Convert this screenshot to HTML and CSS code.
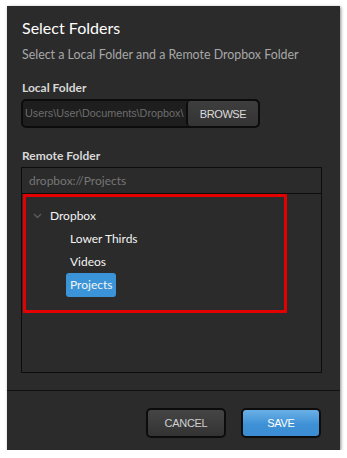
FILE: index.html
```html
<!DOCTYPE html>
<html lang="en">
<head>
<meta charset="UTF-8">
<title>Select Folders</title>
<link rel="stylesheet" href="styles.css">
</head>
<body>

<div class="dialog">
  <div class="content">
    <h1 class="title">Select Folders</h1>
    <p class="subtitle">Select a Local Folder and a Remote Dropbox Folder</p>

    <div class="section-label">Local Folder</div>
    <div class="local-row">
      <div class="local-path">Users\User\Documents\Dropbox\</div>
      <button class="browse">BROWSE</button>
    </div>

    <div class="section-label remote-label">Remote Folder</div>
    <div class="remote-box">
      <div class="remote-path">dropbox://Projects</div>
      <div class="tree">
        <div class="tree-row root">
          <svg class="chevron" width="9" height="6" viewBox="0 0 9 6"><polyline points="1,1 4.5,4.5 8,1" fill="none" stroke="#5c5c5c" stroke-width="1.4"/></svg>
          <span>Dropbox</span>
        </div>
        <div class="tree-row child"><span>Lower Thirds</span></div>
        <div class="tree-row child"><span>Videos</span></div>
        <div class="tree-row child"><span class="selected">Projects</span></div>
        <!-- annotation box -->
        <div class="highlight"></div>
      </div>
    </div>
  </div>

  <div class="footer">
    <button class="btn cancel">CANCEL</button>
    <button class="btn save">SAVE</button>
  </div>
</div>

</body>
</html>
```

FILE: styles.css
```css
body {
    margin: 0;
    padding: 0;
    background-color: #ffffff;
    font-family: Lato, "Open Sans", sans-serif;
}
.dialog {
    width: 333px;
    height: 444px;
    margin: 6px 0 0 7px;
    background-color: #2b2b2b;
    box-shadow: 1px 1px 3px rgba(0, 0, 0, 0.45);
    display: flex;
    flex-direction: column;
}
.content {
    flex: 1;
    padding: 11px 18px 0 14px;
}
.title {
    margin: 0;
    padding-left: 1px;
    font-size: 16px;
    font-weight: normal;
    line-height: 22px;
    color: #ffffff;
}
.subtitle {
    margin: 7px 0 0 0;
    padding-left: 1px;
    font-size: 12.4px;
    line-height: 18px;
    color: #a8a8a8;
}
.section-label {
    margin-top: 16px;
    padding-left: 1px;
    font-size: 12px;
    font-weight: bold;
    line-height: 16px;
    color: #d8d8d8;
}
.remote-label {
    margin-top: 20px;
}
.local-row {
    margin-top: 3px;
    width: 235px;
    height: 25px;
    display: flex;
    border: 2px solid #0c0c0c;
    border-radius: 5px;
    background-color: #1e1e1e;
    overflow: hidden;
}
.local-path {
    flex: 1;
    padding-left: 2px;
    overflow: hidden;
    white-space: nowrap;
    font-family: "Liberation Sans", Arial, sans-serif;
    font-size: 10.8px;
    line-height: 25px;
    color: #6e6e6e;
}
.browse {
    width: 72px;
    border: none;
    border-left: 2px solid #0c0c0c;
    border-radius: 4px;
    background: linear-gradient(#3e3e3e, #343434);
    font-family: "Liberation Sans", Arial, sans-serif;
    font-size: 11px;
    letter-spacing: -0.4px;
    color: #dcdcdc;
    padding: 0;
}
.remote-box {
    margin-top: 3px;
    border: 1px solid #0c0c0c;
}
.remote-path {
    height: 25px;
    padding-left: 7px;
    font-size: 12px;
    line-height: 25px;
    color: #767676;
    border-bottom: 1px solid #0c0c0c;
}
.tree {
    position: relative;
    height: 178px;
    padding-top: 10px;
    box-sizing: border-box;
}
.tree-row {
    height: 23px;
    display: flex;
    align-items: center;
    font-size: 12px;
    color: #f4f4f4;
}
.root {
    padding-left: 11px;
}
.chevron {
    margin-right: 8px;
}
.child {
    padding-left: 48px;
}
.selected {
    margin-left: -4px;
    padding: 4px 4px 5px 4px;
    border-radius: 3px;
    background-color: #3b94d8;
}
.highlight {
    position: absolute;
    left: 1px;
    top: 0;
    width: 258px;
    height: 113px;
    border: 3px solid #e30000;
}
.footer {
    height: 60px;
    border-top: 1px solid #111111;
    display: flex;
    justify-content: flex-end;
    align-items: flex-start;
    gap: 15px;
    padding: 17px 19px 0 0;
    box-sizing: border-box;
}
.btn {
    width: 80px;
    height: 30px;
    border: 2px solid #0c0c0c;
    border-radius: 5px;
    font-family: "Liberation Sans", Arial, sans-serif;
    font-size: 11px;
    letter-spacing: -0.3px;
    padding: 0;
}
.cancel {
    background: linear-gradient(#454545, #333333);
    color: #d0d0d0;
}
.save {
    background: linear-gradient(#6ab0e6, #3f91d6 55%, #3b8cd2);
    color: #ffffff;
}
```
